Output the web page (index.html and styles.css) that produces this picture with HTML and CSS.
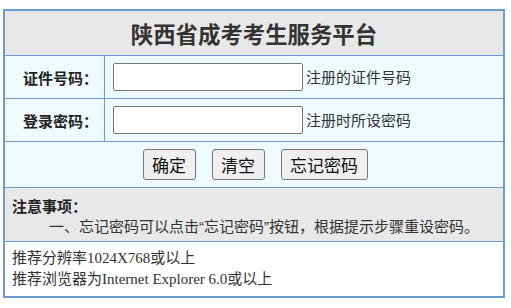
FILE: index.html
```html
<!DOCTYPE html>
<html lang="zh-CN">
<head>
<meta charset="utf-8">
<title>陕西省成考考生服务平台</title>
<link rel="stylesheet" href="styles.css">
</head>
<body>
<div class="box">
  <div class="title">陕西省成考考生服务平台</div>
  <div class="row">
    <div class="label">证件号码：</div>
    <div class="field"><input class="input" type="text"><span class="hint">注册的证件号码</span></div>
  </div>
  <div class="row">
    <div class="label">登录密码：</div>
    <div class="field"><input class="input" type="password"><span class="hint">注册时所设密码</span></div>
  </div>
  <div class="actions">
    <button class="btn" type="button">确定</button>
    <button class="btn" type="button">清空</button>
    <button class="btn" type="button">忘记密码</button>
  </div>
  <div class="notice">
    <div class="notice-title">注意事项：</div>
    <div class="notice-item">一、忘记密码可以点击<span class="q">“</span>忘记密码<span class="q">”</span>按钮，根据提示步骤重设密码。</div>
  </div>
  <div class="footer">
    <div>推荐分辨率1024X768或以上</div>
    <div>推荐浏览器为Internet Explorer 6.0或以上</div>
  </div>
</div>
</body>
</html>
```
FILE: styles.css
```css
html, body {
  margin: 0;
  padding: 0;
  background: #ffffff;
}
body {
  font-family: "Noto Sans CJK SC", sans-serif;
  color: #333333;
}
.box {
  margin: 9px 0 0 3px;
  width: 498px;
  border: 2px solid #6c9bd2;
}
.title {
  height: 44px;
  line-height: 44px;
  background: #e8e8e8;
  border-bottom: 1px solid #6c9bd2;
  text-align: center;
  font-size: 22.4px;
  font-weight: bold;
  color: #333333;
}
.row {
  display: flex;
  height: 42px;
  background: #eefaff;
  border-bottom: 1px solid #6c9bd2;
}
.label {
  width: 100px;
  border-right: 1px solid #6c9bd2;
  display: flex;
  align-items: center;
  padding-left: 18px;
  box-sizing: border-box;
  font-size: 15px;
  font-weight: bold;
  color: #222222;
}
.field {
  display: flex;
  align-items: center;
  gap: 3px;
  padding-left: 8px;
}
.input {
  box-sizing: border-box;
  width: 190px;
  height: 28px;
  margin: 0;
  border: 1px solid #767676;
  border-radius: 2px;
  background: #ffffff;
}
.hint {
  font-size: 15px;
  line-height: 20px;
  color: #333333;
}
.actions {
  height: 45px;
  background: #eefaff;
  border-bottom: 1px solid #6c9bd2;
  display: flex;
  align-items: center;
  justify-content: center;
  gap: 16px;
  padding-left: 2px;
}
.btn {
  height: 31px;
  margin: 0;
  padding: 0 8.5px;
  border: 1px solid #767676;
  border-radius: 3px;
  background: #efefef;
  font-family: "Noto Sans CJK SC", sans-serif;
  font-size: 17px;
  line-height: 29px;
  color: #111111;
}
.notice {
  height: 54px;
  box-sizing: border-box;
  padding: 8px 0 0 7px;
  background: #e8e8e8;
  border-bottom: 1px solid #6c9bd2;
  font-size: 15px;
  line-height: 20px;
}
.notice-title {
  font-weight: bold;
  color: #222222;
}
.notice-item {
  padding-left: 37px;
}
.q {
  font-family: "Liberation Sans", sans-serif;
}
.footer {
  height: 54px;
  box-sizing: border-box;
  padding: 6px 0 0 7px;
  background: #ffffff;
  font-family: "Liberation Serif", "Noto Sans CJK SC", serif;
  font-size: 15px;
  line-height: 21px;
}
```
